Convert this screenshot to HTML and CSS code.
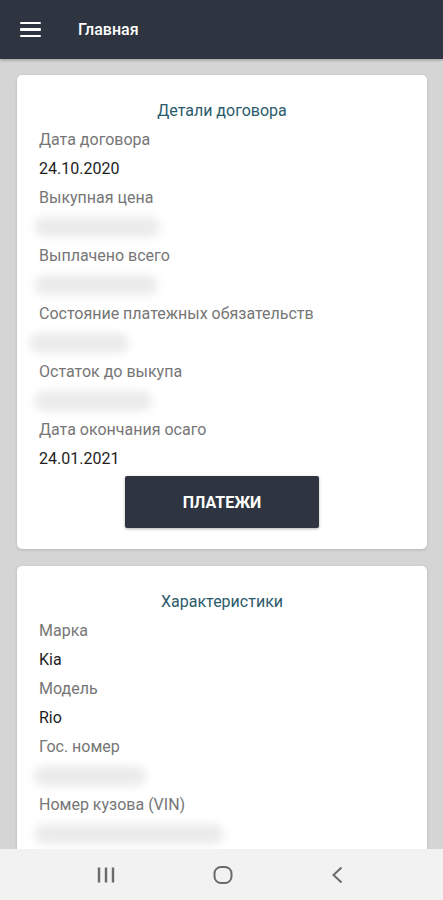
FILE: index.html
```html
<!DOCTYPE html>
<html lang="ru">
  <head>
    <meta charset="UTF-8" />
    <meta name="viewport" content="width=device-width, initial-scale=1.0" />
    <title>Главная</title>
    <link rel="stylesheet" href="styles.css">
  </head>
  <body>
    <!-- Top bar -->
    <header class="topbar">
      <div class="burger">
        <span></span>
        <span></span>
        <span></span>
      </div>
      <div class="topbar-title">Главная</div>
    </header>

    <main class="content">
      <!-- Contract card -->
      <section class="card">
        <h2 class="card-title">Детали договора</h2>
        <div class="label">Дата договора</div>
        <div class="value">24.10.2020</div>
        <div class="label">Выкупная цена</div>
        <div class="value"><span class="hidden-value w1"></span></div>
        <div class="label">Выплачено всего</div>
        <div class="value"><span class="hidden-value w2"></span></div>
        <div class="label">Состояние платежных обязательств</div>
        <div class="value"><span class="hidden-value w3"></span></div>
        <div class="label">Остаток до выкупа</div>
        <div class="value"><span class="hidden-value w4"></span></div>
        <div class="label">Дата окончания осаго</div>
        <div class="value">24.01.2021</div>
        <div class="actions">
          <button class="btn">ПЛАТЕЖИ</button>
        </div>
      </section>

      <!-- Car card -->
      <section class="card">
        <h2 class="card-title">Характеристики</h2>
        <div class="label">Марка</div>
        <div class="value">Kia</div>
        <div class="label">Модель</div>
        <div class="value">Rio</div>
        <div class="label">Гос. номер</div>
        <div class="value"><span class="hidden-value w5"></span></div>
        <div class="label">Номер кузова (VIN)</div>
        <div class="value"><span class="hidden-value w6"></span></div>
        <div class="label">Цвет</div>
        <div class="value">Белый</div>
      </section>
    </main>

    <!-- System navigation -->
    <nav class="sysnav">
      <svg width="20" height="18" viewBox="0 0 20 18">
        <path d="M3 1.5v15M10 1.5v15M17 1.5v15" stroke="#6a6a6a" stroke-width="2.4" fill="none" />
      </svg>
      <svg width="20" height="20" viewBox="0 0 20 20">
        <rect x="1.5" y="2" width="17" height="16" rx="6.5" stroke="#6a6a6a" stroke-width="2" fill="none" />
      </svg>
      <svg width="14" height="20" viewBox="0 0 14 20">
        <path d="M11.5 2.5L3.5 10l8 7.5" stroke="#6a6a6a" stroke-width="2" fill="none" />
      </svg>
    </nav>
  </body>
</html>
```

FILE: styles.css
```css
body {
  margin: 0;
  font-family: Roboto, "Noto Sans", Arial, sans-serif;
  background: #d5d5d5;
  height: 900px;
  overflow: hidden;
}

.topbar {
  height: 59px;
  background: #2f3540;
  display: flex;
  align-items: center;
  padding: 0 20px;
  box-shadow: 0 1px 3px rgba(0, 0, 0, 0.3);
}

.burger {
  width: 21px;
  display: flex;
  flex-direction: column;
  gap: 4px;
  margin-right: 37px;
}

.burger span {
  height: 2.5px;
  background: #fff;
  border-radius: 1px;
}

.topbar-title {
  color: #fff;
  font-size: 16px;
  font-weight: 500;
}

.content {
  padding: 16px 16px 0 17px;
  display: flex;
  flex-direction: column;
  gap: 17px;
}

.card {
  background: #fff;
  border-radius: 5px;
  padding: 21px 22px 21px 22px;
  box-shadow: 0 1px 3px rgba(0, 0, 0, 0.15);
}

.card-title {
  margin: 0;
  text-align: center;
  font-size: 16px;
  font-weight: 400;
  line-height: 29px;
  color: #2b5a6b;
}

.label {
  font-size: 16px;
  line-height: 29px;
  color: #767676;
}

.value {
  font-size: 16px;
  line-height: 29px;
  height: 29px;
  color: #1e1e1e;
  display: flex;
  align-items: center;
}

.hidden-value {
  display: block;
  height: 20px;
  margin-left: -5px;
  background: #ebebeb;
  border-radius: 10px;
  filter: blur(4px);
}

.w1 { width: 126px; }
.w2 { width: 124px; }
.w3 { width: 100px; margin-left: -10px; }
.w4 { width: 118px; }
.w5 { width: 112px; }
.w6 { width: 190px; }

.actions {
  display: flex;
  justify-content: center;
  padding-top: 3px;
}

.btn {
  width: 194px;
  height: 52px;
  background: #2f3540;
  color: #fff;
  border: none;
  border-radius: 2px;
  font-family: Roboto, Arial, sans-serif;
  font-size: 16px;
  font-weight: 700;
  box-shadow: 0 1px 3px rgba(0, 0, 0, 0.3);
}

.sysnav {
  position: fixed;
  left: 0;
  right: 0;
  bottom: 0;
  height: 51px;
  background: #f2f2f2;
  display: flex;
  align-items: center;
  justify-content: space-between;
  padding: 0 99px 0 96px;
}
```
